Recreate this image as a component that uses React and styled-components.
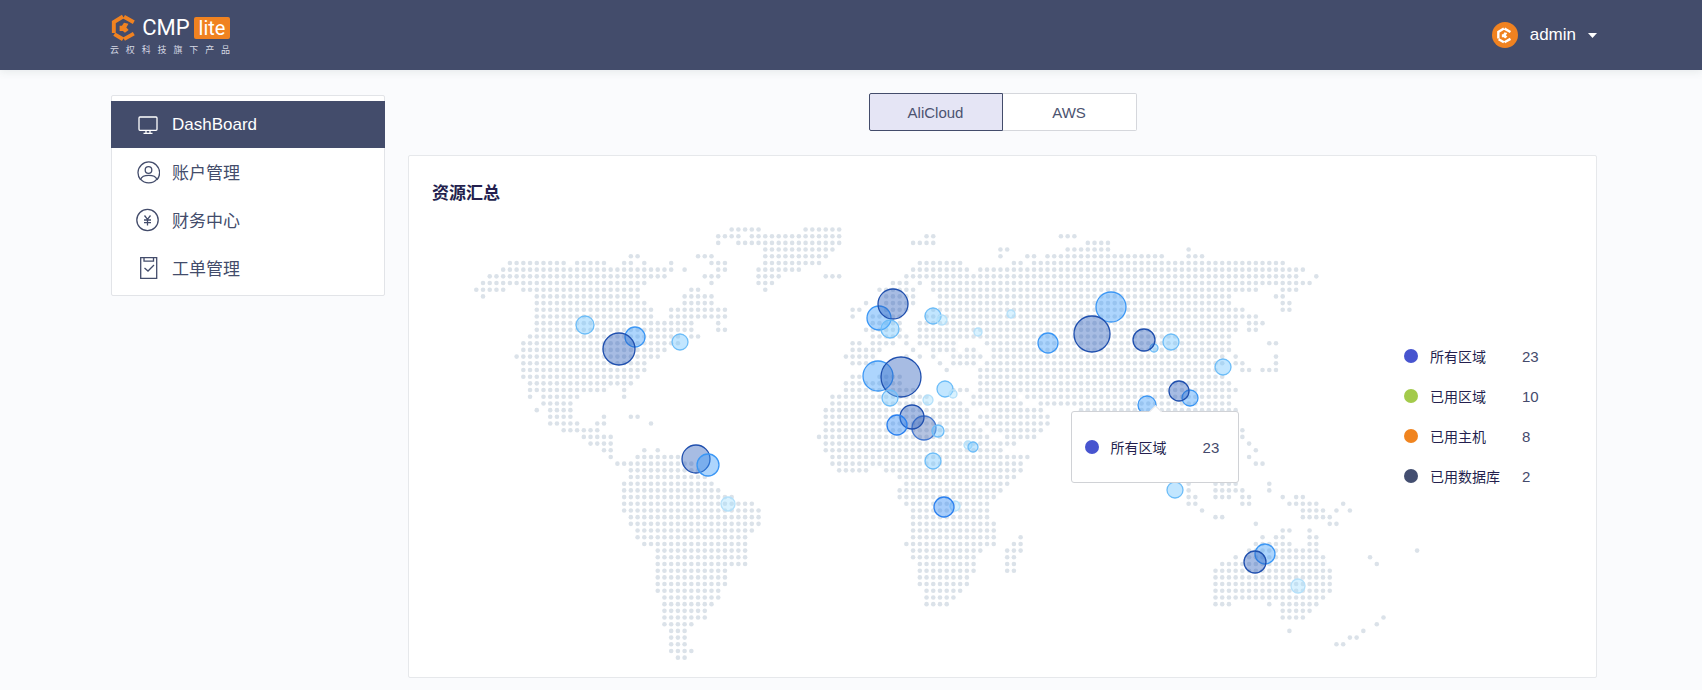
import React from "react";
import styled, { createGlobalStyle } from "styled-components";

const navy = "#434c6b";
const orange = "#f08220";

const GlobalStyle = createGlobalStyle`
  *, *::before, *::after { box-sizing: border-box; }
  body {
    margin: 0;
    background: #fafbfd;
    color: #241f4e;
    font-family: "Liberation Sans", "Noto Sans CJK SC", sans-serif;
    font-size: 15px;
  }
`;

const Header = styled.header`
  display: flex;
  align-items: center;
  justify-content: space-between;
  height: 70px;
  padding: 0 105px 0 110px;
  background: ${navy};
  box-shadow: 0 2px 8px rgba(60, 90, 80, 0.1);
`;

const Brand = styled.a`
  display: block;
  width: 120px;
  color: #fff;
  text-decoration: none;
`;

const BrandRow = styled.span`
  display: flex;
  align-items: center;
  height: 28px;
`;

const BrandName = styled.span`
  flex: 1;
  text-align: center;
  font-family: Roboto, sans-serif;
  font-size: 22px;
  line-height: 28px;
`;

const BrandTag = styled.span`
  width: 36px;
  height: 22px;
  border-radius: 2px;
  background: ${orange};
  text-align: center;
  font-family: Roboto, sans-serif;
  font-size: 20px;
  line-height: 22px;
`;

const BrandLine = styled.span`
  display: block;
  margin-top: 2px;
  font-size: 9px;
  line-height: 12px;
  color: #d6d9e4;
  text-align: justify;
  text-align-last: justify;
`;

const UserButton = styled.button`
  display: flex;
  align-items: center;
  gap: 12px;
  padding: 0;
  border: 0;
  background: none;
  color: #fff;
  font: inherit;
  font-size: 17px;
  cursor: pointer;
`;

const Avatar = styled.span`
  display: grid;
  place-items: center;
  width: 26px;
  height: 26px;
  border-radius: 50%;
  background: ${orange};
`;

const Page = styled.div`
  display: flex;
  align-items: flex-start;
  gap: 23px;
  padding: 23px 105px 11px 111px;
`;

const Sidebar = styled.nav`
  flex: 0 0 274px;
  margin-top: 2px;
  padding: 5px 0 3px;
  border: 1px solid #e2e4e8;
  border-radius: 2px;
  background: #fff;
`;

const NavList = styled.ul`
  display: grid;
  gap: 1px;
  margin: 0 -1px;
  padding: 0;
  list-style: none;
`;

const NavLink = styled.a`
  display: flex;
  align-items: center;
  gap: 12px;
  height: 47px;
  padding: ${(p) => (p.$active ? "0" : "0 0 2px")};
  padding-left: 25px;
  background: ${(p) => (p.$active ? navy : "transparent")};
  color: ${(p) => (p.$active ? "#fff" : navy)};
  font-size: 17px;
  text-decoration: none;
`;

const Content = styled.main`
  flex: 1;
  min-width: 0;
`;

const Providers = styled.div`
  display: flex;
  justify-content: center;
  margin-bottom: 24px;
`;

const ProviderButton = styled.button`
  width: 134px;
  height: 38px;
  padding: 0;
  border: 1px solid ${(p) => (p.$active ? navy : "#d5d7dc")};
  border-left-width: ${(p) => (p.$active ? "1px" : "0")};
  border-radius: ${(p) => (p.$active ? "2px 0 0 2px" : "0 2px 2px 0")};
  background: ${(p) => (p.$active ? "#e5e5f5" : "#fff")};
  color: #4c5370;
  font: inherit;
  cursor: pointer;
`;

const Card = styled.section`
  padding: 25px 0 13px 23px;
  border: 1px solid #e6e8eb;
  border-radius: 2px;
  background: #fff;
`;

const CardTitle = styled.h2`
  margin: 0 0 17px;
  font-size: 17px;
  font-weight: 700;
  line-height: 26px;
`;

const CardBody = styled.div`
  display: flex;
  align-items: flex-start;
  padding-left: 38px;
`;

const MapArea = styled.div`
  position: relative;
  flex: 1;
  min-width: 0;
`;

const MapSvg = styled.svg`
  display: block;
  width: 100%;
  height: auto;
  overflow: visible;
`;

const Tooltip = styled.div`
  position: absolute;
  top: 42.5%;
  left: 73.3%;
  display: flex;
  align-items: center;
  width: 168px;
  height: 72px;
  padding-left: 13px;
  transform: translateX(-50%);
  border: 1px solid #d0d2d6;
  border-radius: 3px;
  background: #fff;

  &::before {
    content: "";
    position: absolute;
    top: -5px;
    left: 50%;
    width: 9px;
    height: 9px;
    margin-left: -4px;
    transform: rotate(45deg);
    border: solid #e3e5e9;
    border-width: 1px 0 0 1px;
    background: #fff;
  }
`;

const Legend = styled.ul`
  flex: 0 0 192px;
  margin: 112px 0 0;
  padding: 0;
  list-style: none;
`;

const LegendItem = styled.li`
  height: 40px;
`;

const StatLine = styled.span`
  display: flex;
  align-items: center;
  height: 40px;
`;

const Dot = styled.span`
  width: 14px;
  height: 14px;
  margin-right: 12px;
  border-radius: 50%;
  background: ${(p) => p.$color};
`;

const StatLabel = styled.span`
  width: 92px;
  font-size: 14px;
`;

const StatValue = styled.span`
  color: #454a6c;
`;

function HexMark({ size, color }) {
  return (
    <svg width={size} height={size} viewBox="0 0 28 30" aria-hidden="true">
      <path
        fill="none"
        stroke={color}
        strokeWidth="4.200"
        d="M12.900 2.700 3.100 8.700V20.300M3.600 21.500 12.900 27M14 26.900l10.500-5.900M14 2.900l10.500 6"
      />
      <path fill={color} d="M14 9.300l4.800 1.200-2.300 4 2.500 2.700-4 3-2.200-2H9.300v-5.500h2.500z" />
    </svg>
  );
}

function Stroke({ children }) {
  return (
    <svg width="24" height="24" viewBox="0 0 24 24" fill="none" stroke="currentColor" strokeWidth="1.3" aria-hidden="true">
      {children}
    </svg>
  );
}

const navItems = [
  {
    label: "DashBoard",
    active: true,
    icon: (
      <Stroke>
        <rect x="3" y="4" width="18" height="13.300" rx="1" />
        <path d="M10 17.300v3M14 17.300v3M7.500 20.300h9" />
      </Stroke>
    ),
  },
  {
    label: "账户管理",
    icon: (
      <Stroke>
        <path d="M4.600 19.800A10.800 10.800 0 1 1 21 19.800" />
        <circle cx="12.500" cy="10" r="3.300" />
        <path d="M4.600 19.200c2-5.200 14.300-5.200 16.300 0-4 5-12.300 5-16.300 0z" />
      </Stroke>
    ),
  },
  {
    label: "财务中心",
    icon: (
      <Stroke>
        <circle cx="11.500" cy="12" r="10.700" />
        <path d="m8.500 7.500 3 3.800 3-3.800M11.500 11v6.500M8 12h7M8 14.700h7" />
      </Stroke>
    ),
  },
  {
    label: "工单管理",
    icon: (
      <Stroke>
        <path d="M4.700 1.700h16v20.600h-16zM8 1.700v3.500h9.500V1.700M8.500 12l3.500 3 6-6" />
      </Stroke>
    ),
  },
];

// Land cells of the dotted map: one entry per row, each a list of "first-last" columns.
const landRows = [
  "38-42 49-54",
  "36-39 41-54 67-68 87-89",
  "36 39-54 65-68 91-94",
  "43-53 78-79 88-94 106",
  "23-24 33-35 43-52 78 82-83 85-102 106-108",
  "5-13 15-19 22-23 25 29 35-37 43-51 66-72 80-81 83-120",
  "4-29 31 36-37 42-48 65-73 75-123",
  "2-28 34-36 42-45 52-54 64-122 125",
  "1-25 35 42-44 62-64 66 68-124",
  "0-4 7-24 32-33 43 60-65 68-116 120-122",
  "1 9-24 31-35 61-65 69-112 119-120",
  "9-25 31-35 58 61-65 69-112 120-121",
  "9-26 29-37 56-57 61-64 68-114 120-121",
  "9-26 29-37 56 59-63 67-116",
  "9-32 36 59-63 66-113 115-117",
  "9-32 36-37 58-63 66-113 115-116",
  "8-30 32-33 59-64 66-112",
  "7-30 56-57 59-62 64 66-71 76-112 118-119",
  "7-28 56-60 65 68-71 73-74 77-112",
  "6-27 55-59 64 66 68 71-75 77-111 113 119",
  "7-25 56-59 69 71-74 76-111 113-114 119",
  "7-25 70 75-110 114-115 117-119",
  "7-24 56-57 60-63 75-111",
  "8-23 55-63 75-112",
  "8-19 22 55-65 71-73 75-113",
  "8 10-15 22 53-67 74-80 82-112",
  "10-14 53-67 69-72 74-81 84-112",
  "9 11-14 52-73 77-84 90-113",
  "11-14 19 23-24 52-73 75-85 90-110",
  "11-15 18-19 26 52-74 76-85",
  "13-18 52-75 77-84 114",
  "16-20 51-76 79-83 114",
  "17-20 52-80 115",
  "19-20 25 27 52-78 116",
  "20 24-30 53-82 115",
  "21-32 53-81 116-117",
  "23-33 54-58 61-81",
  "23-34 63-80",
  "22-35 64-79 106 110-113 118",
  "22-36 63-78 106 110-114 118",
  "22-38 63-77 106-107 110-112 114-115 120 122-123",
  "22-41 64-76 106-107 114-115 121-125 129",
  "22-42 65-76 108 123-126 128 130",
  "23-42 65-76 110-111 123-127",
  "23-42 65-77 116 127-128",
  "24-41 65-77 120-121 124",
  "24-40 65-77 81 117 119-120 124-125",
  "25-40 64-77 80-81 116-121 124-125",
  "27-40 65-75 79-81 115-125 140",
  "27-40 65-74 79-80 113 115-126 133",
  "27-40 66-74 79-80 111-126 134",
  "27-37 66-74 79-80 110-127",
  "27-37 66-73 110-127",
  "27-37 66-73 110-127",
  "27-36 67-72 110-127",
  "28-36 67-71 110-126",
  "28-35 67-70 110-112 118 120-125",
  "28-34 120-124",
  "28-34 120-123 135",
  "28-32 134",
  "29-31 121 132",
  "29-31 130-131",
  "29-31 128-129",
  "29-32",
  "30-31",
];

const land = landRows.flatMap((row, r) =>
  row.split(" ").flatMap((run) => {
    const [first, last = first] = run.split("-").map(Number);
    return Array.from({ length: last - first + 1 }, (_, i) => [first + i, r]);
  })
);

const tones = {
  dark: { stroke: "#1f4fae", fill: "rgba(36, 88, 184, 0.4)" },
  slate: { stroke: "#4477cf", fill: "rgba(70, 105, 180, 0.4)" },
  strong: { stroke: "#2a80f0", fill: "rgba(45, 135, 245, 0.42)" },
  mid: { stroke: "#3b97f5", fill: "rgba(60, 155, 250, 0.42)" },
  light: { stroke: "#6dbdf8", fill: "rgba(110, 195, 255, 0.42)" },
  pale: { stroke: "#b4e0fa", fill: "rgba(160, 222, 255, 0.4)" },
};

const bubbles = [
  [115, 101, 9, "light"], [165, 113, 10, "mid"], [149, 125, 16, "dark"], [210, 118, 8, "light"],
  [226, 235, 14, "dark"], [238, 241, 11, "mid"], [258, 280, 7, "pale"],
  [409, 94, 12, "mid"], [423, 80, 15, "dark"], [420, 105, 9, "light"],
  [463, 92, 8, "light"], [472, 96, 5, "pale"], [541, 90, 4, "pale"], [508, 108, 4, "pale"],
  [408, 152, 15, "mid"], [431, 153, 20, "dark"], [420, 174, 8, "light"],
  [475, 165, 8, "light"], [483, 170, 4, "pale"], [458, 176, 5, "pale"],
  [454, 204, 12, "slate"], [442, 193, 12, "dark"], [427, 201, 10, "strong"], [468, 207, 6, "light"],
  [498, 221, 4, "pale"], [503, 223, 5, "light"], [463, 237, 8, "light"],
  [485, 282, 5, "pale"], [474, 283, 10, "strong"],
  [578, 119, 10, "mid"], [641, 83, 15, "mid"], [622, 110, 18, "dark"],
  [684, 124, 4, "light"], [674, 116, 11, "dark"], [701, 118, 8, "light"], [753, 143, 8, "light"],
  [720, 174, 8, "mid"], [709, 167, 10, "dark"], [677, 181, 9, "mid"], [705, 266, 8, "light"],
  [795, 330, 10, "mid"], [785, 338, 11, "dark"], [828, 362, 7, "pale"],
];

const stats = [
  { label: "所有区域", value: 23, color: "#4754cf" },
  { label: "已用区域", value: 10, color: "#a3ca4b" },
  { label: "已用主机", value: 8, color: "#f0841f" },
  { label: "已用数据库", value: 2, color: "#434e70" },
];

function Stat({ label, value, color }) {
  return (
    <StatLine>
      <Dot $color={color} />
      <StatLabel>{label}</StatLabel>
      <StatValue>{value}</StatValue>
    </StatLine>
  );
}

function WorldMap() {
  return (
    <MapSvg viewBox="0 0 934 440" role="img" aria-label="资源汇总">
      <g fill="#dbe2e9">
        {land.map(([c, r]) => (
          <circle key={`${c}-${r}`} cx={6.3 + c * 6.72} cy={5.5 + r * 6.69} r="2.300" />
        ))}
      </g>
      {bubbles.map(([x, y, r, tone]) => (
        <circle key={`${x}-${y}`} cx={x} cy={y} r={r} strokeWidth="1.300" {...tones[tone]} />
      ))}
    </MapSvg>
  );
}

export default function App() {
  return (
    <>
      <GlobalStyle />
      <Header>
        <Brand href="#">
          <BrandRow>
            <HexMark size={28} color={orange} />
            <BrandName>CMP</BrandName>
            <BrandTag>lite</BrandTag>
          </BrandRow>
          <BrandLine>云权科技旗下产品</BrandLine>
        </Brand>
        <UserButton type="button">
          <Avatar>
            <HexMark size={17} color="#fff" />
          </Avatar>
          admin
          <svg width="9" height="5" viewBox="0 0 9 5" aria-hidden="true">
            <path d="M0 0h9L4.500 5z" fill="#fff" />
          </svg>
        </UserButton>
      </Header>
      <Page>
        <Sidebar>
          <NavList>
            {navItems.map((item) => (
              <li key={item.label}>
                <NavLink href="#" $active={item.active}>
                  {item.icon}
                  {item.label}
                </NavLink>
              </li>
            ))}
          </NavList>
        </Sidebar>
        <Content>
          <Providers>
            <ProviderButton type="button" $active>AliCloud</ProviderButton>
            <ProviderButton type="button">AWS</ProviderButton>
          </Providers>
          <Card>
            <CardTitle>资源汇总</CardTitle>
            <CardBody>
              <MapArea>
                <WorldMap />
                <Tooltip role="tooltip">
                  <Stat {...stats[0]} />
                </Tooltip>
              </MapArea>
              <Legend>
                {stats.map((stat) => (
                  <LegendItem key={stat.label}>
                    <Stat {...stat} />
                  </LegendItem>
                ))}
              </Legend>
            </CardBody>
          </Card>
        </Content>
      </Page>
    </>
  );
}
